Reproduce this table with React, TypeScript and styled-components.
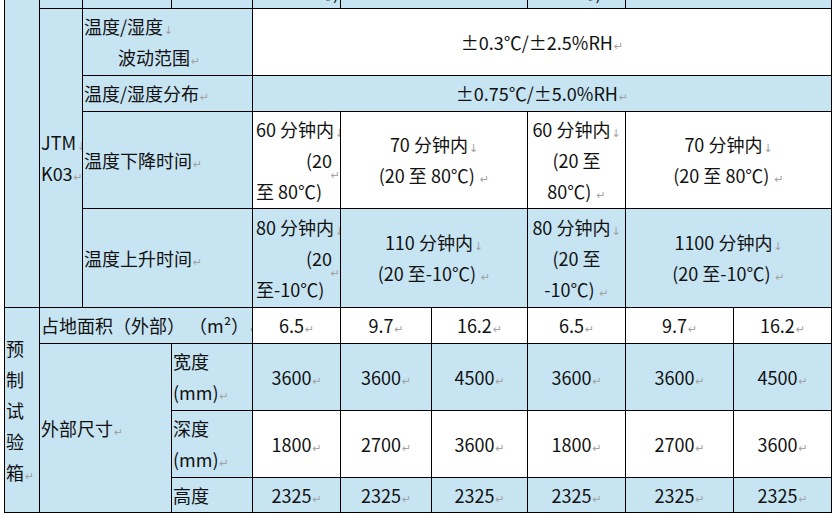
import React from "react";
import styled, { createGlobalStyle } from "styled-components";

const GlobalStyle = createGlobalStyle`
  html, body {
    margin: 0;
    padding: 0;
    background: #fff;
  }
  body {
    font-family: "Noto Sans CJK SC", "Noto Sans", sans-serif;
    color: #111;
    overflow: hidden;
  }
`;

const BLUE = "#c7e4f3";
const COLS = [35, 43, 89, 81, 88, 91, 96, 98, 108, 98];

type Align = "left" | "center" | "right";

export default function App() {
  return (
    <>
      <GlobalStyle />
      <Page>
        <Sheet>
          <colgroup>
            {COLS.map((w, i) => (
              <col key={i} style={{ width: w }} />
            ))}
          </colgroup>
          <tbody>
            <Row $h={40}>
              <Cell $blue rowSpan={5} />
              <Cell $blue />
              <Cell $blue />
              <Cell $blue />
              <Cell $blue $valign="bottom">
                <Line $align="right">-40℃)</Line>
              </Cell>
              <Cell $blue colSpan={2} />
              <Cell $blue $valign="bottom">
                <Line $align="center">-40℃)</Line>
              </Cell>
              <Cell $blue colSpan={2} />
            </Row>

            <Row $h={67}>
              <Cell $blue rowSpan={4} $align="left">
                JTM<Brk />
                <br />
                K03<Para />
              </Cell>
              <Cell $blue colSpan={2} $align="left">
                <Line>
                  温度/湿度<Brk />
                </Line>
                <Line $indent={34}>
                  波动范围<Para />
                </Line>
              </Cell>
              <Cell colSpan={6}>
                ±0.3℃/±2.5%RH<Para />
              </Cell>
            </Row>

            <Row $h={36}>
              <Cell $blue colSpan={2} $align="left">
                温度/湿度分布<Para />
              </Cell>
              <Cell $blue colSpan={6}>
                ±0.75℃/±5.0%RH<Para />
              </Cell>
            </Row>

            <Row $h={97}>
              <Cell $blue colSpan={2} $align="left">
                温度下降时间<Para />
              </Cell>
              <Cell $pad={3}>
                <Line $align="left">
                  60 分钟内<Brk />
                </Line>
                <Line $align="right" $inset={5}>
                  (20
                </Line>
                <Split>
                  <span>至 80℃)</span>
                  <Para />
                </Split>
              </Cell>
              <Cell colSpan={2}>
                <Line>
                  70 分钟内<Brk />
                </Line>
                <Line>
                  (20 至 80℃) <Para />
                </Line>
              </Cell>
              <Cell>
                <Line>
                  60 分钟内<Brk />
                </Line>
                <Line>(20 至</Line>
                <Line>
                  80℃) <Para />
                </Line>
              </Cell>
              <Cell colSpan={2}>
                <Line>
                  70 分钟内<Brk />
                </Line>
                <Line>
                  (20 至 80℃) <Para />
                </Line>
              </Cell>
            </Row>

            <Row $h={99}>
              <Cell $blue colSpan={2} $align="left">
                温度上升时间<Para />
              </Cell>
              <Cell $blue $pad={3}>
                <Line $align="left">
                  80 分钟内<Brk />
                </Line>
                <Line $align="right" $inset={5}>
                  (20
                </Line>
                <Split>
                  <span>至-10℃)</span>
                  <Para />
                </Split>
              </Cell>
              <Cell $blue colSpan={2}>
                <Line>
                  110 分钟内<Brk />
                </Line>
                <Line>
                  (20 至-10℃) <Para />
                </Line>
              </Cell>
              <Cell $blue>
                <Line>
                  80 分钟内<Brk />
                </Line>
                <Line>(20 至</Line>
                <Line>
                  -10℃) <Para />
                </Line>
              </Cell>
              <Cell $blue colSpan={2}>
                <Line>
                  1100 分钟内<Brk />
                </Line>
                <Line>
                  (20 至-10℃) <Para />
                </Line>
              </Cell>
            </Row>

            <Row $h={36}>
              <Cell $blue rowSpan={4} $align="left">
                预<br />制<br />试<br />验<br />箱<Para />
              </Cell>
              <Cell $blue colSpan={3} $align="left">
                占地面积（外部） （m²）<Para />
              </Cell>
              {["6.5", "9.7", "16.2", "6.5", "9.7", "16.2"].map((v, i) => (
                <Cell key={i}>
                  {v}
                  <Para />
                </Cell>
              ))}
            </Row>

            <Row $h={67}>
              <Cell $blue colSpan={2} rowSpan={3} $align="left">
                外部尺寸<Para />
              </Cell>
              <Cell $blue $align="left">
                宽度
                <br />
                (mm)<Para />
              </Cell>
              {["3600", "3600", "4500", "3600", "3600", "4500"].map((v, i) => (
                <Cell $blue key={i}>
                  {v}
                  <Para />
                </Cell>
              ))}
            </Row>

            <Row $h={67}>
              <Cell $blue $align="left">
                深度
                <br />
                (mm)<Para />
              </Cell>
              {["1800", "2700", "3600", "1800", "2700", "3600"].map((v, i) => (
                <Cell key={i}>
                  {v}
                  <Para />
                </Cell>
              ))}
            </Row>

            <Row $h={35}>
              <Cell $blue $align="left">
                高度
              </Cell>
              {["2325", "2325", "2325", "2325", "2325", "2325"].map((v, i) => (
                <Cell $blue key={i}>
                  {v}
                  <Para />
                </Cell>
              ))}
            </Row>
          </tbody>
        </Sheet>
      </Page>
    </>
  );
}

// Word formatting marks: paragraph end and manual line break
function Para() {
  return <Mark>↵</Mark>;
}

function Brk() {
  return <Mark>↓</Mark>;
}

const Page = styled.div`
  width: 835px;
  height: 518px;
  overflow: hidden;
  padding-left: 4px;
  box-sizing: border-box;
`;

const Sheet = styled.table`
  border-collapse: collapse;
  table-layout: fixed;
  width: 828px;
  margin-top: -32px;
  font-size: 18px;
`;

const Row = styled.tr<{ $h: number }>`
  height: ${(p) => p.$h}px;
`;

const Cell = styled.td<{
  $blue?: boolean;
  $align?: Align;
  $valign?: "middle" | "bottom";
  $pad?: number;
}>`
  border: 1px solid #000;
  background: ${(p) => (p.$blue ? BLUE : "#fff")};
  text-align: ${(p) => p.$align ?? "center"};
  vertical-align: ${(p) => p.$valign ?? "middle"};
  padding: 0 ${(p) => p.$pad ?? 1}px;
  line-height: 31px;
  white-space: nowrap;
  overflow: hidden;
`;

const Line = styled.div<{ $align?: Align; $indent?: number; $inset?: number }>`
  text-align: ${(p) => p.$align ?? "inherit"};
  padding-left: ${(p) => p.$indent ?? 0}px;
  padding-right: ${(p) => p.$inset ?? 0}px;
`;

const Split = styled.div`
  display: flex;
  justify-content: space-between;
  margin-right: -3px;
`;

const Mark = styled.span`
  color: #a2a2a2;
  font-family: "DejaVu Sans", sans-serif;
  font-size: 11px;
  line-height: 0;
  margin-left: 1px;
`;
